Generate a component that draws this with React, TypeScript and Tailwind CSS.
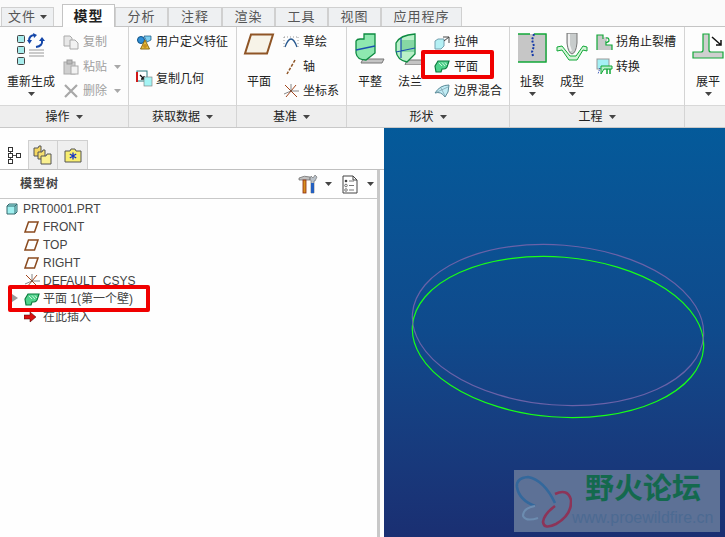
import type { ReactNode } from "react";

const font = { fontFamily: '"Liberation Sans", "Noto Sans CJK SC", sans-serif' };

function Caret({ gray }: { gray?: boolean }) {
  return (
    <svg width="7" height="4" viewBox="0 0 7 4" className="shrink-0">
      <path d="M0 0H7L3.5 4Z" fill={gray ? "#a8a8a8" : "#444"} />
    </svg>
  );
}

function PlaneIcon({ big }: { big?: boolean }) {
  return big ? (
    <svg width="32" height="22" viewBox="0 0 32 22">
      <path d="M8 1.5H30L24 20.5H2Z" fill="#f7f3e8" stroke="#8f5526" strokeWidth="2" />
    </svg>
  ) : (
    <svg width="15" height="12" viewBox="0 0 15 12">
      <path d="M4.5 1H14L10.5 11H1Z" fill="none" stroke="#8a4a1e" strokeWidth="1.500" />
    </svg>
  );
}

function FlatIcon() {
  return (
    <svg width="16" height="13" viewBox="0 0 16 13">
      <path d="M4 1H15L13 7Q12 9 10 9H8L7 12H2L1 6Z" fill="#4fd28c" stroke="#0b7a3c" strokeWidth="1.200" />
      <path d="M5 3L8 6M8 2.500L11 6M11 2.500L13 5" stroke="#c9f5d8" strokeWidth="1" />
    </svg>
  );
}

function CsysIcon() {
  return (
    <svg width="17" height="16" viewBox="0 0 17 16">
      <path d="M8 8L2 2M8 8L14 14M8 8L13 2M8 8L3 14" stroke="#a3461c" strokeWidth="1" />
      <path d="M8 8H16M8 8V1M8 8L1 11" stroke="#555" strokeWidth="0.700" />
    </svg>
  );
}

function CubeIcon({ size = 12 }: { size?: number }) {
  return (
    <svg width={size} height={size} viewBox="0 0 12 12">
      <path d="M1 3L3 1H11V9L9 11H1Z" fill="#9ff0f0" stroke="#34686c" />
      <path d="M9 3V11M9 3H1M9 3L11 1" fill="none" stroke="#34686c" />
    </svg>
  );
}

function RegenIcon() {
  return (
    <svg width="30" height="32" viewBox="0 0 30 32">
      <rect x="1.500" y="2.500" width="7" height="7" rx="1" fill="#a8ecec" stroke="#444" />
      <rect x="1.500" y="13.500" width="7" height="7" rx="1" fill="#a8ecec" stroke="#444" />
      <rect x="1.500" y="24.500" width="7" height="7" rx="1" fill="#a8ecec" stroke="#444" />
      <path d="M13 8Q13 2 19 2M20 14Q27 13 26 7" fill="none" stroke="#1446a8" strokeWidth="2" />
      <path d="M11 7H16L13.500 11ZM17 0L21 2L18 5ZM23 8H29L26 4Z" fill="#1446a8" />
      <path d="M13 17H28M13 20H28M13 23H28" stroke="#999" />
    </svg>
  );
}

function CopyIcon() {
  return (
    <svg width="16" height="15" viewBox="0 0 16 15">
      <path d="M1 1H7L9 3V11H1Z" fill="#e8e8e8" stroke="#aaa" />
      <path d="M7 5H12L15 8V14H7Z" fill="#f2f2f2" stroke="#aaa" />
    </svg>
  );
}

function PasteIcon() {
  return (
    <svg width="16" height="16" viewBox="0 0 16 16">
      <rect x="1" y="3" width="11" height="12" fill="#cfcfcf" stroke="#aaa" />
      <rect x="4" y="1" width="5" height="4" fill="#bbb" stroke="#999" />
      <rect x="8" y="7" width="7" height="8" fill="#f2f2f2" stroke="#aaa" />
    </svg>
  );
}

function CrossIcon() {
  return (
    <svg width="14" height="14" viewBox="0 0 14 14">
      <path d="M1 1L13 13M13 1L1 13" stroke="#a8a8a8" strokeWidth="2.200" />
    </svg>
  );
}

function UdfIcon() {
  return (
    <svg width="16" height="15" viewBox="0 0 16 15">
      <circle cx="5" cy="5" r="3.500" fill="#2f8fd8" stroke="#10507f" />
      <path d="M8 1L15 1L15 5L11 7Z" fill="#7fd0f0" stroke="#10507f" strokeWidth="0.700" />
      <path d="M9 5L13.500 14H4.500Z" fill="#e8c040" stroke="#8a6a10" />
      <circle cx="9" cy="11" r="2" fill="#c89020" />
    </svg>
  );
}

function CopyGeomIcon() {
  return (
    <svg width="17" height="17" viewBox="0 0 17 17">
      <rect x="1" y="1" width="10" height="10" fill="#fff" stroke="#2a7a80" />
      <path d="M0 2H2V12H0Z" fill="#d01818" />
      <path d="M4 5L8 9M8 6V9H5" stroke="#111" strokeWidth="1.300" fill="none" />
      <rect x="8" y="7" width="8" height="9" fill="#a4f4f4" stroke="#777" strokeWidth="0.600" />
    </svg>
  );
}

function SketchIcon() {
  return (
    <svg width="16" height="15" viewBox="0 0 16 15">
      <path d="M2 12Q8 -4 14 12" fill="none" stroke="#27588f" strokeWidth="1.300" />
      <path d="M1 2H15M1 2V14M15 2V14" stroke="#9a9a9a" strokeDasharray="1 2" fill="none" />
    </svg>
  );
}

function AxisIcon() {
  return (
    <svg width="12" height="16" viewBox="0 0 12 16">
      <path d="M10 1L2 15" stroke="#8f5526" strokeWidth="1.500" strokeDasharray="3 1.500" />
    </svg>
  );
}

function PlanarIcon() {
  return (
    <svg width="30" height="32" viewBox="0 0 30 32">
      <path d="M8 26H29L27 30H6Z" fill="#c4c4c4" stroke="#777" />
      <path d="M1 8Q2 6 5 6H9V1H20V20L11 27Q2 27 1 20Z" fill="#8ee8b0" stroke="#0d8a40" strokeWidth="1.300" />
      <path d="M1 17L20 13" stroke="#1a4fb0" strokeWidth="1.400" />
    </svg>
  );
}

function FlangeIcon() {
  return (
    <svg width="30" height="32" viewBox="0 0 30 32">
      <path d="M12 27H29L27 32H10Z" fill="#c4c4c4" stroke="#777" />
      <path d="M1 10Q5 2 20 1V21L12 29Q2 27 1 18Z" fill="#b8f0c8" stroke="#0d8a40" strokeWidth="1.300" />
      <path d="M6 7H19V19H6Z" fill="#64c88c" opacity="0.600" />
      <path d="M6 5V25M1 19L20 15" stroke="#1a4fb0" strokeWidth="1.200" />
    </svg>
  );
}

function ExtrudeIcon() {
  return (
    <svg width="16" height="15" viewBox="0 0 16 15">
      <path d="M1 6L4 4H10V11L7 14H1Z" fill="#b4f0f4" stroke="#74a0b0" />
      <path d="M9 2H15V8M15 2L10 6" fill="none" stroke="#444" />
    </svg>
  );
}

function BlendIcon() {
  return (
    <svg width="17" height="14" viewBox="0 0 17 14">
      <path d="M1 9Q6 1 15 1Q15 9 11 13Q7 7 1 9Z" fill="#c0ecf4" stroke="#5a8a98" />
      <path d="M7 4L11 12M3 8L14 3" stroke="#7a9aa8" strokeWidth="0.700" />
    </svg>
  );
}

function RipIcon() {
  return (
    <svg width="30" height="30" viewBox="0 0 30 30">
      <rect x="1" y="1" width="29" height="28" fill="#c6c6c6" />
      <path d="M1 1H13M17 1H29V29H1" fill="none" stroke="#12a838" strokeWidth="1.400" />
      <path d="M17 1L15 7L17 13L15 19L16 23" fill="none" stroke="#1438a8" strokeWidth="2" strokeDasharray="2 1.500" />
    </svg>
  );
}

function FormIcon() {
  return (
    <svg width="32" height="30" viewBox="0 0 32 30">
      <path d="M1 14L6 13L14 23H20L27 13L31 14V18L27 17L21 27H13L6 17L1 18Z" fill="#d4f4d8" stroke="#12a838" />
      <path d="M11 0H21V10Q20 20 16 21Q12 20 11 10Z" fill="#c8cccc" stroke="#777" />
      <path d="M13 1V12L15 18" stroke="#f2f2f2" strokeWidth="2" fill="none" />
    </svg>
  );
}

function ReliefIcon() {
  return (
    <svg width="17" height="17" viewBox="0 0 17 17">
      <path d="M1 1H7V5Q7 3 10 3Q12 4 11 7H10V11H16V16H1Z" fill="#c8c8c8" />
      <path d="M1 16V1H7V5M10 4Q13 3 13 7Q11 9 10 8V11H16V16" fill="none" stroke="#12a838" strokeWidth="1.200" />
    </svg>
  );
}

function ConvertIcon() {
  return (
    <svg width="17" height="17" viewBox="0 0 17 17">
      <rect x="1" y="1" width="12" height="10" fill="#a4f0f4" stroke="#999" />
      <path d="M5 8L16 8V11H8L5 16Z" fill="#b8f0c8" stroke="#12a838" />
      <path d="M11 11V16M14 11V16" stroke="#12a838" strokeWidth="1.500" />
      <path d="M4 10L2 16" stroke="#1438a8" strokeDasharray="1 1" />
    </svg>
  );
}

function UnbendIcon() {
  return (
    <svg width="32" height="26" viewBox="0 0 32 26">
      <path d="M11 1H17V17Q17 19 19 19H31V25H1V19H9Q11 19 11 17Z" fill="#cfcfcf" />
      <path d="M11 1H17V17Q17 19 19 19H31V25H1V19H9Q11 19 11 17Z" fill="none" stroke="#12a838" strokeWidth="1.200" />
      <path d="M20 4L29 12M29 7V12H24" fill="none" stroke="#111" strokeWidth="1.500" />
    </svg>
  );
}

function InsertArrow() {
  return (
    <svg width="13" height="11" viewBox="0 0 13 11">
      <path d="M0 3H6V0L12 5L6 10V7H0Z" fill="#d81010" stroke="#400" strokeWidth="0.500" />
    </svg>
  );
}

function TreeViewIcon() {
  return (
    <svg width="14" height="18" viewBox="0 0 14 18">
      <path d="M3.500 4V15M3.500 9.500H9" stroke="#555" />
      <rect x="1.500" y="1.500" width="4" height="4" fill="#fff" stroke="#333" />
      <rect x="1.500" y="7.500" width="4" height="4" fill="#fff" stroke="#333" />
      <rect x="1.500" y="13.500" width="4" height="4" fill="#fff" stroke="#333" />
      <rect x="9.500" y="7.500" width="4" height="4" fill="#fff" stroke="#333" />
    </svg>
  );
}

function FoldersIcon() {
  return (
    <svg width="20" height="20" viewBox="0 0 20 20">
      <path d="M1 3H5L6 1H8V11H1Z" fill="#f6d860" stroke="#555" />
      <path d="M5 7H9L10 5H12V14H5Z" fill="#f6e070" stroke="#555" />
      <path d="M8 11H13L14 9H18V19H8Z" fill="#faf090" stroke="#555" />
    </svg>
  );
}

function StarFolderIcon() {
  return (
    <svg width="18" height="15" viewBox="0 0 18 15">
      <path d="M1 3H6L7 1H11L12 3H17V14H1Z" fill="#f8ee70" stroke="#555" />
      <path d="M9 4.500V11.500M5.800 6L12.200 10M12.200 6L5.800 10" stroke="#1432c8" strokeWidth="1.300" />
    </svg>
  );
}

function ToolsIcon() {
  return (
    <svg width="20" height="20" viewBox="0 0 20 20">
      <path d="M1 4Q6 1 12 3V6H1Z" fill="#c0c0c0" stroke="#666" strokeWidth="0.700" />
      <rect x="5" y="6" width="3" height="13" fill="#d89020" stroke="#8a2a10" strokeWidth="0.800" />
      <path d="M13 2L15 4L17 1L19 3L17 7H16V19H13V7L12 5Z" fill="#b8c0c8" stroke="#666" strokeWidth="0.600" />
      <rect x="13" y="9" width="3" height="10" fill="#2460c0" />
    </svg>
  );
}

function ListIcon() {
  return (
    <svg width="16" height="19" viewBox="0 0 16 19">
      <path d="M1 1H11L15 5V18H1Z" fill="#fff" stroke="#444" />
      <path d="M11 1V5H15" fill="none" stroke="#444" />
      <circle cx="4" cy="6" r="1.300" fill="#444" />
      <circle cx="4" cy="10.500" r="1.300" fill="#fff" stroke="#444" strokeWidth="0.700" />
      <circle cx="4" cy="15" r="1.300" fill="#fff" stroke="#444" strokeWidth="0.700" />
      <path d="M7 6H12M7 10.500H12M7 15H12" stroke="#777" />
    </svg>
  );
}

function LogoMark() {
  return (
    <svg width="58" height="62" viewBox="0 0 58 62">
      <path d="M41 33Q30 10 14 7Q2 8 3 17Q5 30 21 36" fill="none" stroke="#33689c" strokeWidth="2.600" />
      <path d="M41 24Q54 18 57 30Q58 45 42 54Q30 60 29 52Q30 44 41 36" fill="none" stroke="#8c3458" strokeWidth="2.600" />
      <path d="M21 36Q9 38 9 46Q12 52 24 48" fill="none" stroke="#6c8cb0" strokeWidth="2" />
    </svg>
  );
}

function Tab({ label, active, caret, w }: { label: string; active?: boolean; caret?: boolean; w: string }) {
  return active ? (
    <div className={`${w} h-[23px] -mb-px flex items-center justify-center bg-white border border-b-0 border-[#c4c4c4] text-[14px] font-bold text-[#222] tracking-[1px]`}>
      {label}
    </div>
  ) : (
    <div className={`${w} h-[19px] flex items-center justify-center gap-1 bg-[#eef0f2] border border-b-0 border-[#d0d0d0] text-[13px] text-[#555] tracking-[1px]`}>
      {label}
      {caret && <Caret />}
    </div>
  );
}

function Big({ icon, label, caret, w = "w-[36px]" }: { icon: ReactNode; label: string; caret?: boolean; w?: string }) {
  return (
    <div className={`${w} flex flex-col items-center text-[12px] text-[#222]`}>
      <div className="h-[47px] flex items-start justify-center pt-[6px]">{icon}</div>
      <div className="h-[16px] leading-[16px] whitespace-nowrap">{label}</div>
      {caret && (
        <div className="mt-[2px]">
          <Caret />
        </div>
      )}
    </div>
  );
}

function Row({ icon, label, off, caret }: { icon: ReactNode; label: string; off?: boolean; caret?: boolean }) {
  return (
    <div className={`h-[24.5px] flex items-center text-[12px] whitespace-nowrap ${off ? "text-[#a0a0a0]" : "text-[#222]"}`}>
      <div className="w-[20px] flex justify-center shrink-0">{icon}</div>
      <span className="ml-[2px]">{label}</span>
      {caret && (
        <span className="ml-[7px]">
          <Caret gray />
        </span>
      )}
    </div>
  );
}

function Group({ w, title, children }: { w: string; title: string; children: ReactNode }) {
  return (
    <div className={`${w} shrink-0 flex flex-col border-r border-[#d4d4d4]`}>
      <div className="h-[78px] flex">{children}</div>
      <div className="h-[22px] flex items-center justify-center gap-[6px] bg-[#eeeeee] border-t border-[#d8d8d8] text-[12px] text-[#222]">
        {title}
        <Caret />
      </div>
    </div>
  );
}

function TreeRow({ icon, label, inset }: { icon: ReactNode; label: string; inset?: boolean }) {
  return (
    <div className={`h-[18px] flex items-center text-[12px] text-[#444] whitespace-nowrap ${inset ? "pl-[24px]" : "pl-[6px]"}`}>
      <div className={`${inset ? "w-[19px]" : "w-[17px]"} flex items-center`}>{icon}</div>
      {label}
    </div>
  );
}

export default function App() {
  return (
    <div className="relative w-[725px] h-[537px] overflow-hidden bg-white flex flex-col" style={font}>
      {/* tabs */}
      <div className="h-[27px] shrink-0 flex items-end pl-[1px] bg-[#fafafa] border-b border-[#c4c4c4]">
        <Tab label="文件" caret w="w-[53px]" />
        <div className="w-[8px]" />
        <Tab label="模型" active w="w-[53px]" />
        <Tab label="分析" w="w-[53px]" />
        <Tab label="注释" w="w-[54px]" />
        <Tab label="渲染" w="w-[53px]" />
        <Tab label="工具" w="w-[53px]" />
        <Tab label="视图" w="w-[53px]" />
        <Tab label="应用程序" w="w-[81px]" />
      </div>

      {/* ribbon */}
      <div className="h-[101px] shrink-0 flex bg-[#fdfdfd] border-b border-[#c8c8c8]">
        <Group w="w-[129px]" title="操作">
          <div className="pl-[6px] pr-[5px]">
            <Big icon={<RegenIcon />} label="重新生成" caret w="w-[50px]" />
          </div>
          <div className="pt-[3px]">
            <Row icon={<CopyIcon />} label="复制" off />
            <Row icon={<PasteIcon />} label="粘贴" off caret />
            <Row icon={<CrossIcon />} label="删除" off caret />
          </div>
        </Group>
        <Group w="w-[108px]" title="获取数据">
          <div className="pl-[5px] pt-[3px]">
            <Row icon={<UdfIcon />} label="用户定义特征" />
            <div className="h-[12px]" />
            <Row icon={<CopyGeomIcon />} label="复制几何" />
          </div>
        </Group>
        <Group w="w-[110px]" title="基准">
          <div className="pl-[4px] pr-[4px]">
            <Big icon={<PlaneIcon big />} label="平面" />
          </div>
          <div className="pt-[3px]">
            <Row icon={<SketchIcon />} label="草绘" />
            <Row icon={<AxisIcon />} label="轴" />
            <Row icon={<CsysIcon />} label="坐标系" />
          </div>
        </Group>
        <Group w="w-[163px]" title="形状">
          <div className="pl-[5px] flex gap-[4px]">
            <Big icon={<PlanarIcon />} label="平整" />
            <Big icon={<FlangeIcon />} label="法兰" />
          </div>
          <div className="pt-[3px] pl-[4px]">
            <Row icon={<ExtrudeIcon />} label="拉伸" />
            <Row icon={<FlatIcon />} label="平面" />
            <Row icon={<BlendIcon />} label="边界混合" />
          </div>
        </Group>
        <Group w="w-[175px]" title="工程">
          <div className="pl-[4px] flex gap-[4px]">
            <Big icon={<RipIcon />} label="扯裂" caret />
            <Big icon={<FormIcon />} label="成型" caret />
          </div>
          <div className="pt-[3px] pl-[4px]">
            <Row icon={<ReliefIcon />} label="拐角止裂槽" />
            <Row icon={<ConvertIcon />} label="转换" />
          </div>
        </Group>
        <div className="flex-1 flex flex-col">
          <div className="h-[78px] pl-[5px]">
            <Big icon={<UnbendIcon />} label="展平" caret />
          </div>
          <div className="h-[22px] bg-[#eeeeee] border-t border-[#d8d8d8]" />
        </div>
      </div>

      {/* main */}
      <div className="flex-1 flex min-h-0">
        <div className="w-[384px] shrink-0 flex flex-col bg-[#fefefe]">
          <div className="h-[13px]" />
          <div className="h-[29px] flex items-end border-b border-[#c0c0c0]">
            <div className="w-[28px] h-[29px] flex items-center justify-center bg-white">
              <TreeViewIcon />
            </div>
            <div className="w-[30px] h-[29px] flex items-center justify-center bg-[#efefef] border border-b-0 border-[#d0d0d0]">
              <FoldersIcon />
            </div>
            <div className="w-[30px] h-[29px] flex items-center justify-center bg-[#efefef] border border-b-0 border-l-0 border-[#d0d0d0]">
              <StarFolderIcon />
            </div>
          </div>
          <div className="flex-1 flex pr-[4px] min-h-0">
            <div className="flex-1 flex flex-col">
              <div className="h-[29px] flex items-center justify-between pl-[20px] pr-[4px] border-b border-[#c8c8c8]">
                <span className="text-[12px] font-bold text-[#444] tracking-[1px]">模型树</span>
                <div className="flex items-center">
                  <ToolsIcon />
                  <span className="ml-[7px] mr-[10px]">
                    <Caret />
                  </span>
                  <ListIcon />
                  <span className="ml-[9px] -mr-[1px]">
                    <Caret />
                  </span>
                </div>
              </div>
              <div className="pt-px">
                <TreeRow icon={<CubeIcon />} label="PRT0001.PRT" />
                <TreeRow icon={<PlaneIcon />} label="FRONT" inset />
                <TreeRow icon={<PlaneIcon />} label="TOP" inset />
                <TreeRow icon={<PlaneIcon />} label="RIGHT" inset />
                <TreeRow icon={<CsysIcon />} label="DEFAULT_CSYS" inset />
                <TreeRow icon={<FlatIcon />} label="平面 1(第一个壁)" inset />
                <TreeRow icon={<InsertArrow />} label="在此插入" inset />
              </div>
            </div>
            <div className="w-[3px] bg-[#c8c8c8]" />
          </div>
        </div>

        {/* graphics window */}
        <div className="flex-1 bg-gradient-to-b from-[#045a9a] via-[#0f4a8c] to-[#1a2f72]">
          <svg width="341" height="409" viewBox="384 128 341 409" className="block">
            <ellipse cx="558" cy="337" rx="146" ry="80" fill="none" stroke="#18ff18" strokeWidth="1.200" transform="rotate(4.500 558 337)" />
            <ellipse cx="558" cy="325" rx="146" ry="80" fill="none" stroke="#6a62a8" strokeWidth="1.200" transform="rotate(4.500 558 325)" />
          </svg>
        </div>
      </div>

      {/* red callouts */}
      <div className="absolute left-[421px] top-[50px] w-[73px] h-[29px] border-[4px] border-[#f00000] rounded-[2px]" />
      <div className="absolute left-[8px] top-[285px] w-[142px] h-[27px] border-[4px] border-[#f00000] rounded-[2px]" />
      <svg width="6" height="8" viewBox="0 0 6 8" className="absolute left-[12px] top-[294px]">
        <path d="M0 0L6 4L0 8Z" fill="#9a9a9a" />
      </svg>

      {/* watermark */}
      <div className="absolute left-[514px] top-[470px] w-[206px] h-[62px] flex bg-[#5d7196] overflow-hidden">
        <div className="w-[58px] shrink-0">
          <LogoMark />
        </div>
        <div className="flex flex-col">
          <div className="h-[38px] pl-[13px] pt-[2px] text-[29px] leading-[34px] font-bold text-[#14694e] whitespace-nowrap">野火论坛</div>
          <div className="text-[16px] leading-[20px] text-[#4c6a92] whitespace-nowrap">www.proewildfire.cn</div>
        </div>
      </div>
    </div>
  );
}
